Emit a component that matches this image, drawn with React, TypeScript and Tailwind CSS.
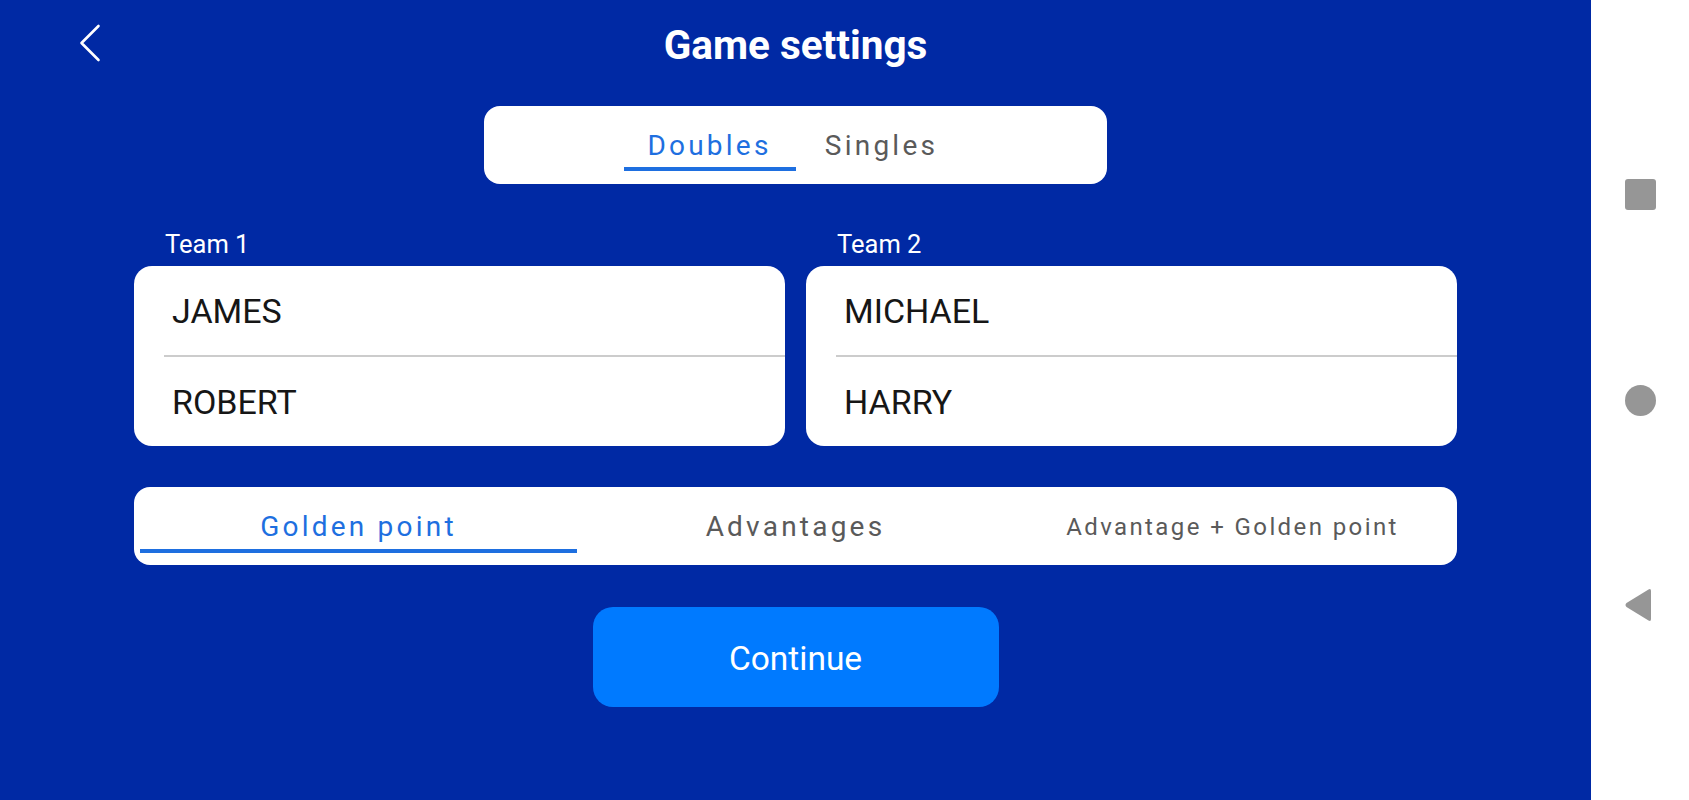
import React, { useState } from "react";

function BackChevron() {
  return (
    <svg width="22" height="38" viewBox="0 0 22 38" fill="none" className="ml-[79px] mb-[3px]">
      <path d="M19.5 2 L2.5 19 L19.5 36" stroke="#ffffff" strokeWidth="2.6" strokeLinecap="round" strokeLinejoin="round" />
    </svg>
  );
}

function NameRow({ name }: { name: string }) {
  return (
    <div className="h-[89px] flex items-center pl-[38px] text-[34px] leading-[40px] text-[#161616]">
      {name}
    </div>
  );
}

function TeamCard({ label, a, b }: { label: string; a: string; b: string }) {
  return (
    <div className="flex flex-col">
      <div className="h-[30px] leading-[30px] pl-[31px] text-[25.5px] text-white">{label}</div>
      <div className="mt-[7px] h-[180px] bg-white rounded-[18px] flex flex-col overflow-hidden">
        <NameRow name={a} />
        <div className="ml-[30px] h-[2px] bg-[#cccccc]" />
        <NameRow name={b} />
      </div>
    </div>
  );
}

export default function App() {
  const [mode, setMode] = useState(0);
  const [type, setType] = useState(0);
  const types = ["Doubles", "Singles"];
  const modes = ["Golden point", "Advantages", "Advantage + Golden point"];

  return (
    <div className="w-[1689px] h-[800px] flex font-[family-name:Roboto,sans-serif] overflow-hidden">
      <div className="w-[1591px] h-full bg-[#0029a4] flex flex-col items-center">
        <div className="w-full h-[89px] grid grid-cols-[1fr_auto_1fr] items-center">
          <div className="flex items-center">
            <BackChevron />
          </div>
          <div className="text-white font-bold text-[40.5px] leading-[46px]">Game settings</div>
          <div />
        </div>

        <div className="mt-[17px] w-[623px] h-[78px] bg-white rounded-[16px] flex justify-center pt-[20px]">
          {types.map((t, i) => (
            <button key={t} onClick={() => setType(i)} className="w-[172px] flex flex-col items-stretch">
              <span
                className={
                  "h-[40px] leading-[40px] text-[28px] font-[450] tracking-[0.115em] text-center " +
                  (type === i ? "text-[#1e6fe0]" : "text-[#5a5a5a]")
                }
              >
                {t}
              </span>
              <span className={"mt-[1px] h-[4px] " + (type === i ? "bg-[#1e6fe0]" : "bg-transparent")} />
            </button>
          ))}
        </div>

        <div className="mt-[45px] w-full px-[134px] grid grid-cols-2 gap-[21px]">
          <TeamCard label="Team 1" a="JAMES" b="ROBERT" />
          <TeamCard label="Team 2" a="MICHAEL" b="HARRY" />
        </div>

        <div className="mt-[41px] w-full px-[134px]">
          <div className="h-[78px] bg-white rounded-[16px] px-[6px] pt-[20px] grid grid-cols-3">
            {modes.map((m, i) => (
              <button key={m} onClick={() => setMode(i)} className="flex flex-col items-stretch">
                <span
                  className={
                    "h-[40px] leading-[40px] font-[450] text-center whitespace-nowrap " +
                    (i === 2 ? "text-[24px] tracking-[0.1em] " : "text-[28px] tracking-[0.115em] ") +
                    (mode === i ? "text-[#1e6fe0]" : "text-[#5a5a5a]")
                  }
                >
                  {m}
                </span>
                <span className={"mt-[2px] h-[4px] " + (mode === i ? "bg-[#1e6fe0]" : "bg-transparent")} />
              </button>
            ))}
          </div>
        </div>

        <button className="mt-[42px] w-[406px] h-[100px] rounded-[20px] bg-[#007aff] text-white text-[33.5px] leading-[40px] pt-[4px] flex items-center justify-center">
          Continue
        </button>
      </div>

      <div className="w-[98px] h-full bg-white flex flex-col items-center justify-center">
        <div className="w-[31px] h-[31px] rounded-[3px] bg-[#969696]" />
        <div className="mt-[175px] w-[31px] h-[31px] rounded-full bg-[#969696]" />
        <svg className="mt-[172px] mr-[2px]" width="32" height="34" viewBox="0 0 32 34">
          <path d="M28 3 L28 31 Q28 34 25.5 32.6 L3.5 19 Q1.5 17 3.5 15 L25.5 1.4 Q28 0 28 3 Z" fill="#969696" />
        </svg>
      </div>
    </div>
  );
}
